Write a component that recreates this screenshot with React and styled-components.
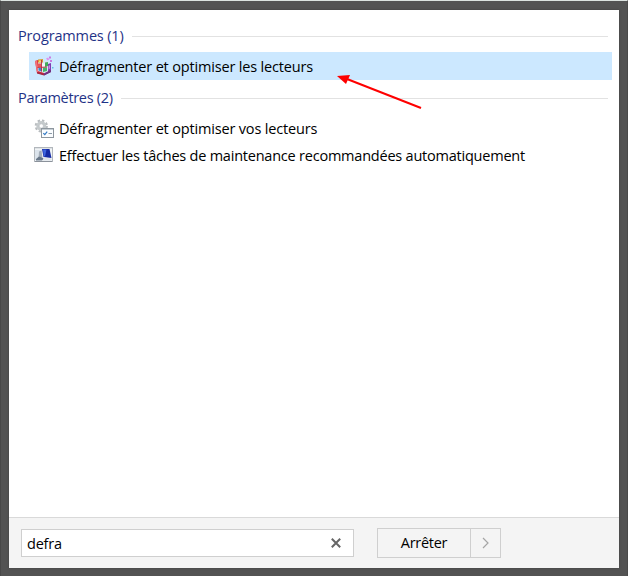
import React, { useState } from 'react';
import styled, { createGlobalStyle } from 'styled-components';

const GlobalStyle = createGlobalStyle`
* { box-sizing: border-box; }
body {
  margin: 0;
  background: #535353;
  font-family: 'Open Sans', 'Noto Sans', sans-serif;
  font-size: 14.5px;
  color: #000;
}
`;

const Backdrop = styled.div`
  display: flex;
  width: 628px;
  height: 576px;
  padding: 9px 8px 8px 8px;
  background: #535353;
  border-top: 1px solid #dce3e0;
  border-left: 1px solid #484848;
  border-right: 1px solid #4a4a4a;
`;

const MainBox = styled.div`
  display: flex;
  flex-direction: column;
  flex: 1;
  background: #fff;
  box-shadow: 0 0 2px #404040;
`;

const Results = styled.div`
  flex: 1;
  padding-top: 15px;
`;

const GroupTitle = styled.div`
  display: flex;
  align-items: center;
  gap: ${props => props.$gap}px;
  height: 22px;
  padding: 0 11px 0 9px;
  color: #1f3387;
  white-space: nowrap;
  letter-spacing: ${props => props.$spacing}px;

  &::after {
    content: '';
    flex: 1;
    height: 1px;
    background: #e2e2e2;
  }
`;

const TitleText = styled.span`
  padding-bottom: 2px;
`;

const List = styled.div`
  padding: ${props => props.$padding};
`;

const Row = styled.div`
  display: flex;
  align-items: center;
  gap: 5px;
  height: ${props => (props.$selected ? 28 : 27)}px;
  margin: 0 7px 0 20px;
  padding-left: 5px;
  background: ${props => (props.$selected ? '#cce8ff' : 'transparent')};
  white-space: nowrap;
`;

const RowText = styled.span`
  padding-top: ${props => (props.$selected ? 2 : 0)}px;
  line-height: 20px;
  letter-spacing: ${props => props.$spacing}px;
`;

const Icon = styled.svg`
  width: 20px;
  height: 20px;
  flex: none;
`;

const Footer = styled.div`
  display: flex;
  align-items: center;
  gap: 23px;
  height: 51px;
  padding-left: 12px;
  background: #f4f4f4;
  border-top: 1px solid #d9d9d9;
`;

const SearchBox = styled.div`
  display: flex;
  align-items: center;
  width: 333px;
  height: 28px;
  padding: 0 12px 0 5px;
  background: #fff;
  border: 1px solid #cfcfcf;
`;

const SearchInput = styled.input`
  flex: 1;
  min-width: 0;
  padding: 0;
  border: none;
  outline: none;
  font: inherit;
  letter-spacing: -0.2px;
  background: transparent;
`;

const ClearButton = styled.button`
  display: flex;
  padding: 0;
  border: none;
  background: none;
`;

const PowerGroup = styled.div`
  display: flex;
  width: 124px;
  height: 30px;
  border: 1px solid #cfcfcf;
`;

const PowerButton = styled.button`
  display: flex;
  align-items: center;
  justify-content: center;
  width: ${props => props.$width}px;
  padding: 0 0 1px;
  border: none;
  border-left: ${props => (props.$divided ? '1px solid #cfcfcf' : 'none')};
  background: none;
  font: inherit;
  letter-spacing: -0.3px;
  color: #000;
`;

const Arrow = styled.svg`
  position: absolute;
  left: 330px;
  top: 68px;
  width: 96px;
  height: 44px;
  pointer-events: none;
`;

const DefragIcon = () => (
  <Icon viewBox="0 0 20 20">
    <path d="M1 5 L4 4 V14 L10 16 V19 L3 17 Z" fill="#d9303c" />
    <path d="M1 5 L3 4.5 L4.5 15 L3 17 Z" fill="#f0737c" />
    <path d="M4 5 H14 L16 14 L10 17 L4 15 Z" fill="#d8e4ef" />
    <path d="M4 3.5 L9 3 V6.5 H4 Z" fill="#d89a31" />
    <path d="M5 4.5 H8 V6 H5 Z" fill="#f6dc6a" />
    <path d="M4 7.5 H7 V11 H4 Z" fill="#e8575a" />
    <path d="M8 7.5 H11 V11 H8 Z" fill="#f4f7fa" />
    <path d="M4.5 12 H8 V15.5 L4.5 14.5 Z" fill="#3f86cd" />
    <path d="M9 11.5 H13 V15 L9 16 Z" fill="#45b66c" />
    <path d="M11 6.5 L14 6 V10 L11 11 Z" fill="#3fac5b" />
    <path d="M7.5 4 V15.5 M3.5 11.5 L13 11" stroke="#ba2940" strokeWidth="0.9" />
    <path d="M14 8 L17 7 V15 L14 17 Z" fill="#813bb2" />
    <path d="M14.5 10 L16 9 V12.5 L14.5 13.5 Z" fill="#c58ae0" />
    <path d="M3 16 L10 17.5 L17 14 V16 L10 19.5 L3 17.5 Z" fill="#a62944" />
    <path d="M10 17.5 L17 14 V16 L10 19.5 Z" fill="#6c3187" />
    <path d="M12 2.5 L14 1.5 L15.5 3.5 L13.5 4.5 Z" fill="#dd93ee" />
    <path d="M15 0.5 H17 V2.5 H15 Z M16 4 H18 V6 H16 Z" fill="#c97be0" />
    <path d="M18 11 H19.5 V12.5 H18 Z" fill="#64bbe4" />
  </Icon>
);

const GearIcon = () => (
  <Icon viewBox="0 0 20 20">
    <circle cx="7.3" cy="7" r="5.5" fill="none" stroke="#b7bbbe" strokeWidth="2.2" strokeDasharray="2.4 1.92" />
    <circle cx="7.3" cy="7" r="3.6" fill="#fff" stroke="#c5cacc" strokeWidth="2.8" />
    <circle cx="7.3" cy="7" r="2.2" fill="#fff" stroke="#a9afb3" strokeWidth="0.6" />
    <rect x="7.5" y="9.5" width="12" height="9" fill="#fbfdff" stroke="#8d969e" />
    <path d="M8 10.5 H19" stroke="#c6ced4" />
    <path d="M9.3 14.2 L10.8 15.7 L13.2 12.7" fill="none" stroke="#347bc4" strokeWidth="1.2" />
    <path d="M14.5 14.5 H18" stroke="#8c9ba8" />
  </Icon>
);

const MonitorIcon = () => (
  <Icon viewBox="0 0 20 20">
    <rect x="0.5" y="1.5" width="18" height="14" fill="#f1f4f6" stroke="#b2b7bc" />
    <path d="M1 2.5 H18" stroke="#dfe3e6" />
    <path d="M1 4 H8 V14 H1 Z" fill="#dce4ec" />
    <path d="M8 3 L15.5 3 L17.5 12 L9.5 11 Z" fill="#152ba5" />
    <path d="M9 3.5 L12.5 3.5 L11 10.5 L9.8 10.3 Z" fill="#3e66df" />
    <path d="M5 5.5 L7.5 4.5 L8.5 12 L4.5 13 Z" fill="#a4aeb9" />
    <path d="M2 13 L5 10.5 L10 12.5 L8 14.5 H2 Z" fill="#69788a" />
    <path d="M9.5 11.5 L17.5 12.5 V14.5 H9 Z" fill="#dfe4e9" />
    <path d="M1 15.5 H18" stroke="#8b929b" />
  </Icon>
);

const programs = [
  { name: 'Défragmenter et optimiser les lecteurs', icon: <DefragIcon />, spacing: -0.17, selected: true },
];

const settings = [
  { name: 'Défragmenter et optimiser vos lecteurs', icon: <GearIcon />, spacing: -0.17 },
  { name: 'Effectuer les tâches de maintenance recommandées automatiquement', icon: <MonitorIcon />, spacing: -0.22 },
];

const ResultRow = ({ item }) => (
  <Row $selected={item.selected}>
    {item.icon}
    <RowText $selected={item.selected} $spacing={item.spacing}>{item.name}</RowText>
  </Row>
);

const App = () => {
  const [query, setQuery] = useState('defra');

  return (
    <Backdrop>
      <GlobalStyle />
      <MainBox>
        <Results>
          <GroupTitle $gap={8} $spacing={-0.15}><TitleText>Programmes (1)</TitleText></GroupTitle>
          <List $padding="5px 0 7px">
            {programs.map(item => <ResultRow key={item.name} item={item} />)}
          </List>
          <GroupTitle $gap={8} $spacing={-0.32}><TitleText>Paramètres (2)</TitleText></GroupTitle>
          <List $padding="6px 0 0">
            {settings.map(item => <ResultRow key={item.name} item={item} />)}
          </List>
        </Results>

        <Footer>
          <SearchBox>
            <SearchInput value={query} onChange={event => setQuery(event.target.value)} />
            <ClearButton aria-label="Effacer" onClick={() => setQuery('')}>
              <svg width="10" height="10" viewBox="0 0 10 10">
                <path d="M0.8 0.8 L9.2 9.2 M9.2 0.8 L0.8 9.2" stroke="#666" strokeWidth="2" />
              </svg>
            </ClearButton>
          </SearchBox>
          <PowerGroup>
            <PowerButton $width={92}>Arrêter</PowerButton>
            <PowerButton $width={30} $divided>
              <svg width="7" height="12" viewBox="0 0 7 12">
                <path d="M1 1 L6 6 L1 11" fill="none" stroke="#a5a5a5" strokeWidth="1.2" />
              </svg>
            </PowerButton>
          </PowerGroup>
        </Footer>
      </MainBox>

      <Arrow viewBox="0 0 96 44">
        <path d="M17 11 L91 40" stroke="#fe0000" strokeWidth="2" />
        <path d="M7 8 L20 7 L16 16 Z" fill="#fe0000" />
      </Arrow>
    </Backdrop>
  );
};

export default App;
